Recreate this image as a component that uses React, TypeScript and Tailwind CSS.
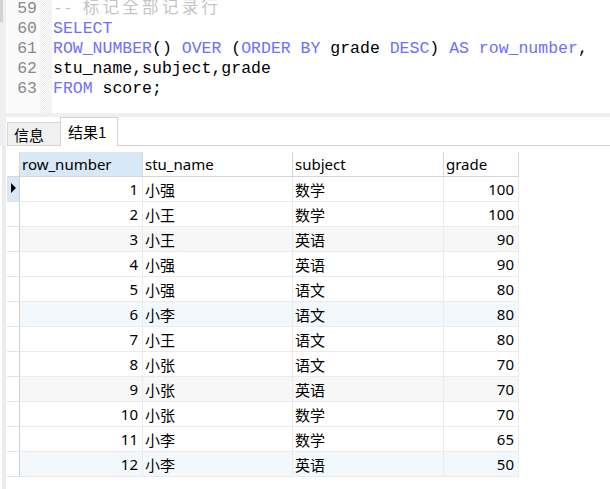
import React from "react";

const rows: [number, string, string, number][] = [
  [1, "小强", "数学", 100],
  [2, "小王", "数学", 100],
  [3, "小王", "英语", 90],
  [4, "小强", "英语", 90],
  [5, "小强", "语文", 80],
  [6, "小李", "语文", 80],
  [7, "小王", "语文", 80],
  [8, "小张", "语文", 70],
  [9, "小张", "英语", 70],
  [10, "小张", "数学", 70],
  [11, "小李", "数学", 65],
  [12, "小李", "英语", 50],
];

const K = ({ children }: { children: React.ReactNode }) => (
  <span className="text-[#6e6eff]">{children}</span>
);

function rowBg(i: number) {
  if (i === 3 || i === 9) return "bg-[#f7f7f7]";
  if (i === 6 || i === 12) return "bg-[#f3f8fd]";
  return "bg-white";
}

export default function App() {
  return (
    <div className="w-[610px] h-[489px] bg-white overflow-hidden flex flex-col font-['Noto_Sans','Noto_Sans_CJK_SC',sans-serif] text-black">
      {/* editor */}
      <div className="h-[113px] shrink-0 flex overflow-hidden">
        <div className="w-[6px] bg-[#efefef] flex flex-col shrink-0">
          <div className="h-[22px] w-[3px] bg-[#d2d2d2]" />
        </div>
        <div className="w-[34px] shrink-0 bg-[#fafafa] font-['Liberation_Mono',monospace] text-[16.5px] leading-[20px] text-[#8a8a8a] text-right pr-[3px] -mt-[1px]">
          <div>59</div>
          <div>60</div>
          <div>61</div>
          <div>62</div>
          <div>63</div>
        </div>
        <div className="w-[12px] shrink-0 bg-[conic-gradient(#ececec_25%,#fafafa_0_50%,#ececec_0_75%,#fafafa_0)] bg-[length:2px_2px]" />
        <div className="pl-[1px] -mt-[1px] font-['Liberation_Mono','Noto_Sans_CJK_SC',monospace] text-[16.5px] leading-[20px] whitespace-pre">
          <div className="text-[#c4c4c4]">
            {"-- "}
            <span className="tracking-[3.3px]">标记全部记录行</span>
          </div>
          <div>
            <K>SELECT</K>
          </div>
          <div>
            <K>ROW_NUMBER</K>() <K>OVER</K> (<K>ORDER BY</K> grade <K>DESC</K>) <K>AS</K>{" "}
            <K>row_number</K>,
          </div>
          <div>stu_name,subject,grade</div>
          <div>
            <K>FROM</K> score;
          </div>
        </div>
      </div>
      <div className="h-[4px] shrink-0 bg-[#efefef]" />
      {/* tabs */}
      <div className="h-[29px] shrink-0 flex text-[15px] font-['Noto_Sans_CJK_SC',sans-serif]">
        <div className="w-[6px] bg-[#efefef] shrink-0" />
        <div className="w-[1px] shrink-0" />
        <div className="w-[53px] shrink-0 flex flex-col">
          <div className="h-[5px]" />
          <div className="flex-1 bg-[#f0f0f0] border border-r-0 border-[#d4d4d4] flex items-center pl-[6px] leading-none">
            信息
          </div>
        </div>
        <div className="w-[58px] shrink-0 border-t border-l border-r border-[#d4d4d4] flex items-center pl-[7px] pb-[1px] leading-none">
          结果1
        </div>
        <div className="flex-1 border-b border-[#d4d4d4]" />
      </div>
      {/* grid area */}
      <div className="flex-1 flex">
        <div className="w-[2px] shrink-0" />
        <div className="w-[4px] shrink-0 bg-[#ececec]" />
        <div className="w-[1px] shrink-0" />
        <div className="pt-[6px] text-[15px] leading-none">
          {/* header */}
          <div className="flex h-[25px] border-b border-[#d6d6d6]">
            <div className="w-[13px] border-r border-[#d6d6d6]" />
            <div className="w-[123px] bg-[#d9e8f7] border-r border-[#d6d6d6] flex items-center pl-[2px]">
              row_number
            </div>
            <div className="w-[150px] border-r border-[#d6d6d6] flex items-center pl-[2px]">
              stu_name
            </div>
            <div className="w-[151px] border-r border-[#d6d6d6] flex items-center pl-[2px]">
              subject
            </div>
            <div className="w-[75px] border-r border-[#d6d6d6] flex items-center pl-[2px]">
              grade
            </div>
          </div>
          {rows.map(([n, name, subj, g]) => (
            <div key={n} className="flex h-[25px]">
              <div
                className={`w-[13px] border-r border-b border-r-[#d0d0d0] border-b-[#e4e4e4] flex items-center ${
                  n === 1 ? "bg-[#d9e8f7]" : "bg-white"
                }`}
              >
                {n === 1 && (
                  <svg width="13" height="25" viewBox="0 0 13 25" className="shrink-0">
                    <path d="M4 6 L9 11 L4 16 Z" fill="#000" />
                  </svg>
                )}
              </div>
              <div className={`flex ${rowBg(n)}`}>
                <div className="w-[123px] border-r border-b border-[#ebebeb] flex items-center justify-end pr-[4px]">
                  {n}
                </div>
                <div className="w-[150px] border-r border-b border-[#ebebeb] flex items-center pl-[2px] font-['Noto_Sans_CJK_SC',sans-serif]">
                  {name}
                </div>
                <div className="w-[151px] border-r border-b border-[#ebebeb] flex items-center pl-[2px] font-['Noto_Sans_CJK_SC',sans-serif]">
                  {subj}
                </div>
                <div className="w-[75px] border-r border-b border-[#ebebeb] flex items-center justify-end pr-[4px]">
                  {g}
                </div>
              </div>
            </div>
          ))}
        </div>
      </div>
    </div>
  );
}
